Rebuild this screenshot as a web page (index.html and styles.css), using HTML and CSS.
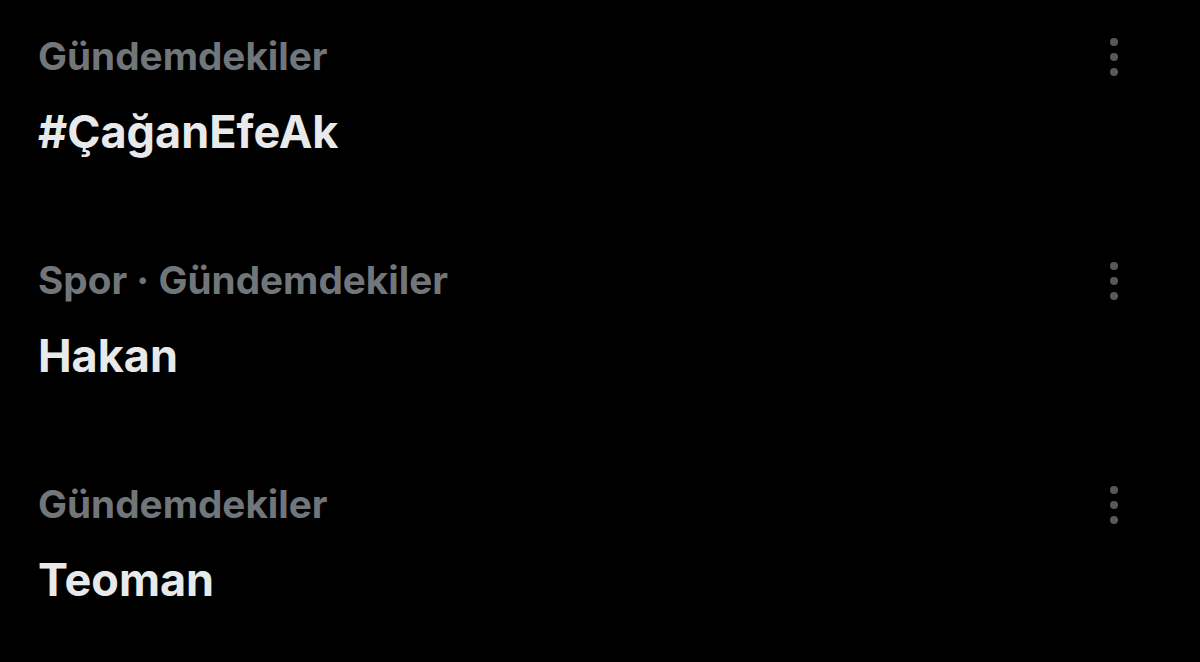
FILE: index.html
```html
<!DOCTYPE html>
<html lang="tr">
<head>
    <meta charset="UTF-8">
    <meta name="viewport" content="width=device-width, initial-scale=1.0">
    <title>Gündem</title>
    <link rel="stylesheet" href="styles.css">
</head>
<body>

    <div class="trends">
        <div class="trend">
            <div class="trend-text">
                <p class="category">Gündemdekiler</p>
                <p class="title">#ÇağanEfeAk</p>
            </div>
            <svg class="more" viewBox="0 0 10 38" aria-hidden="true">
                <circle cx="5" cy="4" r="4"></circle>
                <circle cx="5" cy="19" r="4"></circle>
                <circle cx="5" cy="34" r="4"></circle>
            </svg>
        </div>
        <div class="trend">
            <div class="trend-text">
                <p class="category">Spor · Gündemdekiler</p>
                <p class="title">Hakan</p>
            </div>
            <svg class="more" viewBox="0 0 10 38" aria-hidden="true">
                <circle cx="5" cy="4" r="4"></circle>
                <circle cx="5" cy="19" r="4"></circle>
                <circle cx="5" cy="34" r="4"></circle>
            </svg>
        </div>
        <div class="trend">
            <div class="trend-text">
                <p class="category">Gündemdekiler</p>
                <p class="title">Teoman</p>
            </div>
            <svg class="more" viewBox="0 0 10 38" aria-hidden="true">
                <circle cx="5" cy="4" r="4"></circle>
                <circle cx="5" cy="19" r="4"></circle>
                <circle cx="5" cy="34" r="4"></circle>
            </svg>
        </div>
    </div>

</body>
</html>
```

FILE: styles.css
```css
body { margin: 0; background: #000; font-family: Inter, "Liberation Sans", Arial, sans-serif; }
.trends { padding: 32px 81px 0 38px; }
.trend { display: flex; justify-content: space-between; align-items: flex-start; padding-bottom: 94px; }
.trend:last-child { padding-bottom: 40px; }
.trend-text p { margin: 0; }
.category { font-size: 38.7px; line-height: 48px; font-weight: 700; color: #71767b; }
.title { font-size: 45px; line-height: 60px; font-weight: 700; color: #e7e9ea; margin-top: 22px !important; }
.more { width: 10px; height: 38px; fill: #55595d; margin-top: 6px; }
```
